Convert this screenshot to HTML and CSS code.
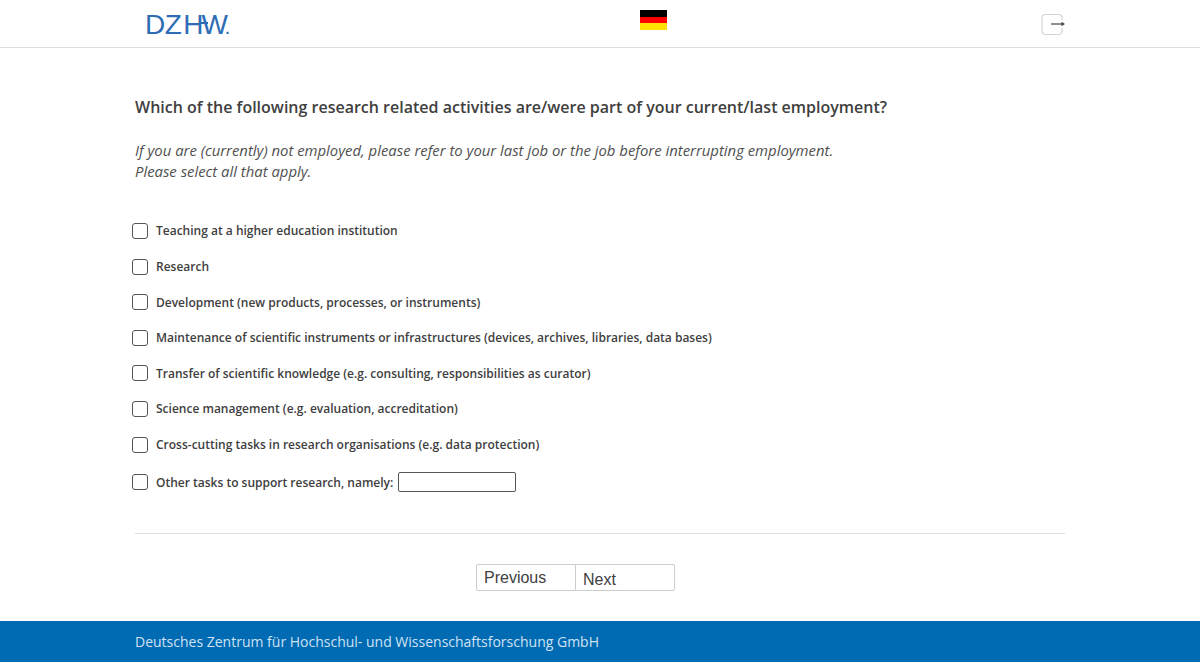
FILE: index.html
```html
<!DOCTYPE html>
<html lang="en">
<head>
    <meta charset="UTF-8">
    <meta name="viewport" content="width=device-width, initial-scale=1.0">
    <title>DZHW Survey</title>
    <link rel="stylesheet" href="styles.css">
</head>
<body>
    <div class="header">
        <div class="header-inner">
            <div class="logo">DZ<span class="logo-h">H</span>W<span class="logo-dot">.</span></div>
            <div class="flag">
                <div class="flag-black"></div>
                <div class="flag-red"></div>
                <div class="flag-gold"></div>
            </div>
            <div class="logout">
                <svg width="24" height="24" viewBox="0 0 24 24">
                    <rect x="1" y="2.5" width="20" height="20" rx="3.5" fill="#fff" stroke="#d4d4d4" stroke-width="1.2"/>
                    <rect x="16" y="8" width="8" height="8" fill="#fff"/>
                    <path d="M10 12H21" stroke="#444" stroke-width="1.2"/>
                    <path d="M20.5 9.8L24 12L20.5 14.2Z" fill="#444"/>
                </svg>
            </div>
        </div>
    </div>

    <div class="main">
        <h1 class="question">Which of the following research related activities are/were part of your current/last employment?</h1>
        <p class="hint">If you are (currently) not employed, please refer to your last job or the job before interrupting employment.<br>Please select all that apply.</p>

        <div class="options">
            <label class="option"><input type="checkbox"><span>Teaching at a higher education institution</span></label>
            <label class="option"><input type="checkbox"><span>Research</span></label>
            <label class="option"><input type="checkbox"><span>Development (new products, processes, or instruments)</span></label>
            <label class="option"><input type="checkbox"><span>Maintenance of scientific instruments or infrastructures (devices, archives, libraries, data bases)</span></label>
            <label class="option"><input type="checkbox"><span>Transfer of scientific knowledge (e.g. consulting, responsibilities as curator)</span></label>
            <label class="option"><input type="checkbox"><span>Science management (e.g. evaluation, accreditation)</span></label>
            <label class="option"><input type="checkbox"><span>Cross-cutting tasks in research organisations (e.g. data protection)</span></label>
            <label class="option option-other"><input type="checkbox"><span>Other tasks to support research, namely:</span><input type="text" class="other-input"></label>
        </div>

        <hr class="divider">

        <div class="controls">
            <button class="btn btn-prev">Previous</button>
            <button class="btn btn-next">Next</button>
        </div>
    </div>

    <div class="footer">
        <div class="footer-inner">Deutsches Zentrum für Hochschul- und Wissenschaftsforschung GmbH</div>
    </div>
</body>
</html>
```

FILE: styles.css
```css
body {
    font-family: 'Open Sans', sans-serif;
    background-color: #ffffff;
    margin: 0;
    padding: 0;
    color: #404040;
}

.header {
    height: 47px;
    border-bottom: 1px solid #dddddd;
}

.header-inner {
    width: 930px;
    margin: 0 auto;
    height: 47px;
    display: grid;
    grid-template-columns: 505px auto 1fr;
}

.logo {
    font-family: 'Liberation Sans', Arial, sans-serif;
    font-size: 28px;
    line-height: 50px;
    letter-spacing: -0.5px;
    color: #2e6db4;
    padding-left: 10px;
}

.logo-h {
    position: relative;
    letter-spacing: -2px;
    margin-left: 2px;
}

/* crossbar of the H runs on into the W */
.logo-h::after {
    content: '';
    position: absolute;
    left: 16px;
    right: -6px;
    top: 13px;
    height: 2px;
    background-color: #2e6db4;
}

.logo-dot {
    font-size: 14px;
    font-weight: bold;
    margin-left: -2px;
}

.flag {
    width: 27px;
    height: 20px;
    margin-top: 10px;
}

.flag-black { height: 7px; background-color: #000000; }
.flag-red { height: 6px; background-color: #ff0000; }
.flag-gold { height: 7px; background-color: #ffe000; }

.logout {
    justify-self: end;
    margin-top: 12px;
    height: 24px;
}

.main {
    width: 930px;
    margin: 0 auto;
}

.question {
    font-size: 16px;
    font-weight: 600;
    line-height: 22px;
    margin: 0;
    padding-top: 48px;
}

.hint {
    font-size: 14.87px;
    font-style: italic;
    line-height: 21px;
    margin: 22px 0 0 0;
    color: #505050;
}

.options {
    margin-top: 31.2px;
    margin-left: -3px;
}

.option {
    display: flex;
    align-items: center;
    height: 35.6px;
    font-size: 12px;
    font-weight: 600;
}

.option input[type="checkbox"] {
    appearance: none;
    width: 16px;
    height: 16px;
    margin: 0 8px 0 0;
    border: 1px solid #555;
    border-radius: 3px;
    background-color: #fff;
}

.option-other {
    height: 40px;
}

.other-input {
    width: 118px;
    height: 20px;
    box-sizing: border-box;
    margin-left: 5px;
    border: 1px solid #555;
    border-radius: 2px;
    padding: 0 4px;
}

.divider {
    border: none;
    border-top: 1px solid #dddddd;
    margin: 30.8px 0 0 0;
}

.controls {
    display: flex;
    justify-content: center;
    margin-top: 30px;
    padding-right: 49px;
}

.btn {
    width: 100px;
    height: 27px;
    box-sizing: border-box;
    font-family: 'Liberation Sans', Arial, sans-serif;
    font-size: 16px;
    color: #404040;
    text-align: left;
    background-color: #fff;
    border: 1px solid #cccccc;
    padding: 0 7px;
}

.btn-prev {
    border-radius: 2px 0 0 2px;
}

.btn-next {
    margin-left: -1px;
    border-radius: 0 2px 2px 0;
    padding-top: 4px;
}

.footer {
    margin-top: 30px;
    height: 41px;
    background-color: #006ab3;
    color: #cfe3f3;
    font-size: 14px;
    line-height: 41px;
}

.footer-inner {
    width: 930px;
    margin: 0 auto;
}
```
